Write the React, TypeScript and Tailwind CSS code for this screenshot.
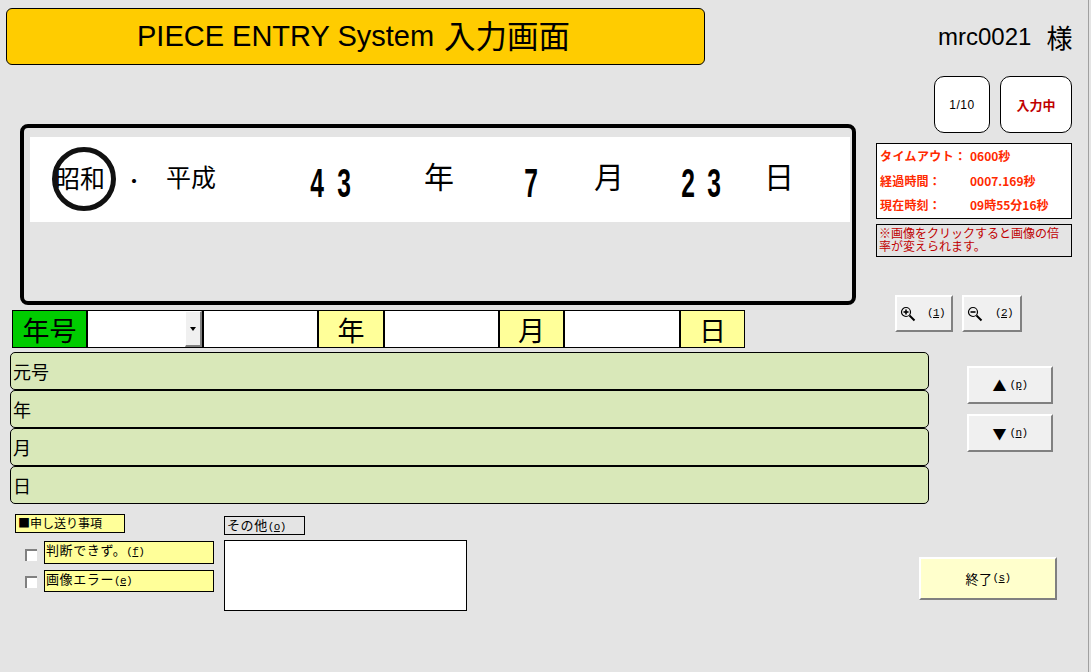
const jp = "font-['Noto_Sans_CJK_JP','Liberation_Sans',sans-serif]";
const sans = "font-['Liberation_Sans','Noto_Sans_CJK_JP',sans-serif]";
const bevel = "border-2 border-t-white border-l-white border-b-[#808080] border-r-[#808080] bg-[#f0f0f0] flex items-center text-[12px] text-black";

function Key({ k }: { k: string }) {
  return (
    <span className="font-['Liberation_Mono',monospace] text-[11px] tracking-[-0.6px] leading-none">
      (<u>{k}</u>)
    </span>
  );
}

function Magnifier({ plus }: { plus: boolean }) {
  return (
    <svg width="16" height="16" viewBox="0 0 16 16" fill="none" className="shrink-0">
      <circle cx="6" cy="6" r="4.5" stroke="black" strokeWidth="1.2" />
      <path d="M3.5 6H8.5" stroke="black" strokeWidth="1.6" />
      {plus && <path d="M6 3.5V8.5" stroke="black" strokeWidth="1.6" />}
      <path d="M9.5 9.5L14.5 14.5" stroke="black" strokeWidth="2" />
    </svg>
  );
}

function Digit({ d, ml }: { d: string; ml: string }) {
  return (
    <span className={`${ml} ${sans} w-[14px] mt-[8px] shrink-0 flex justify-center text-[41px] font-bold leading-none scale-x-[0.6]`}>
      {d}
    </span>
  );
}

function Cell({ w, children, bg }: { w: string; children?: React.ReactNode; bg: string }) {
  return (
    <div className={`${w} ${bg} h-[38px] border border-black flex items-center justify-center text-[27px] leading-none text-black`}>
      {children}
    </div>
  );
}

function GreenRow({ text }: { text: string }) {
  return (
    <div className="h-[38px] rounded-[5px] border border-black bg-[#d9e8b9] flex items-center pl-[2px] text-[18px] text-black">
      {text}
    </div>
  );
}

function InfoRow({ label, value, wide }: { label: string; value: string; wide?: boolean }) {
  return (
    <div className="flex h-[24.5px] items-center whitespace-nowrap">
      <span className={`w-[90px] ${wide ? "tracking-[0.4px]" : "tracking-[0.2px]"}`}>{label}</span>
      <span>{value}</span>
    </div>
  );
}

export default function App() {
  return (
    <div className={`w-[1091px] h-[672px] bg-[#e4e4e4] overflow-hidden ${jp}`}>
      <div className="w-[1089px] h-[672px] border-r border-[#a0a0a0] flex flex-col">
        <div className="flex h-[348px]">
          <div className="w-[876px] shrink-0 flex flex-col">
            <div className="ml-[6px] mt-[8px] w-[699px] h-[57px] rounded-[6px] border border-black bg-[#ffcc00] flex items-center pl-[130px] text-[29px] leading-none text-black whitespace-nowrap">
              <span className={sans}>PIECE ENTRY System</span>
              <span className="ml-[10px] text-[31.5px] -mt-[3px]">入力画面</span>
            </div>
            <div className="ml-[20px] mt-[59px] w-[836px] h-[181px] rounded-[8px] border-[4px] border-black pt-[9px] pl-[6px] pr-[2px]">
              <div className="h-[85px] bg-white flex items-center text-black leading-none whitespace-nowrap relative">
                <span className="ml-[25px] w-[52px] text-[25px] -mt-[4px] shrink-0">昭和</span>
                <div className="absolute left-[22px] top-[10px] w-[64px] h-[64px] rounded-full border-[5px] border-[#111]" />
                <span className="ml-[17px] w-[20px] text-center text-[16px] font-bold shrink-0">・</span>
                <span className="ml-[22px] w-[50px] text-[25px] -mt-[6px] shrink-0">平成</span>
                <Digit d="4" ml="ml-[94px]" />
                <Digit d="3" ml="ml-[13px]" />
                <span className="ml-[73px] w-[30px] text-[30px] -mt-[10px] shrink-0">年</span>
                <Digit d="7" ml="ml-[70px]" />
                <span className="ml-[56px] w-[30px] text-[30px] -mt-[10px] shrink-0">月</span>
                <Digit d="2" ml="ml-[57px]" />
                <Digit d="3" ml="ml-[12px]" />
                <span className="ml-[43px] w-[30px] text-[30px] -mt-[10px] shrink-0">日</span>
              </div>
            </div>
            <div className="ml-[12px] mt-[5px] flex">
              <Cell w="w-[75px]" bg="bg-[#00cc00]">年号</Cell>
              <div className="w-[116px] h-[38px] border border-black bg-white flex justify-end items-stretch">
                <div className="w-[17px] border-l border-t border-t-white border-l-white border-r-2 border-b-2 border-r-[#808080] border-b-[#808080] bg-[#f0f0f0] flex items-center justify-center">
                  <div className="w-0 h-0 border-l-[3px] border-r-[3px] border-t-[4px] border-l-transparent border-r-transparent border-t-black" />
                </div>
              </div>
              <Cell w="w-[115px]" bg="bg-white" />
              <Cell w="w-[66px]" bg="bg-[#ffff99]">年</Cell>
              <Cell w="w-[115px]" bg="bg-white" />
              <Cell w="w-[65px]" bg="bg-[#ffff99]">月</Cell>
              <Cell w="w-[116px]" bg="bg-white" />
              <Cell w="w-[65px]" bg="bg-[#ffff99]">日</Cell>
            </div>
          </div>
          <div className="flex-1 flex flex-col">
            <div className="ml-[62px] mt-[22px] h-[30px] flex items-center whitespace-nowrap text-black">
              <span className={`${sans} text-[24px] leading-none`}>mrc0021</span>
              <span className="ml-[15px] text-[26px] leading-none">様</span>
            </div>
            <div className="ml-[58px] mt-[24px] flex gap-[10px]">
              <div className={`w-[56px] h-[57px] rounded-[10px] border border-black bg-white flex items-center justify-center text-[12px] tracking-[0.5px] text-black ${sans}`}>1/10</div>
              <div className="w-[72px] h-[57px] rounded-[10px] border border-black bg-white flex items-center justify-center text-[13px] font-bold text-[#c00000]">入力中</div>
            </div>
            <div className="mt-[10px] w-[196px] h-[76px] border border-black bg-white pl-[3px] text-[12px] font-bold text-[#ff2a00] leading-none">
              <InfoRow label="タイムアウト：" value="0600秒" wide />
              <InfoRow label="経過時間：" value="0007.169秒" />
              <InfoRow label="現在時刻：" value="09時55分16秒" />
            </div>
            <div className="mt-[5px] w-[196px] h-[33px] border border-black bg-[#e4e4e4] px-[2px] pt-[1px] text-[12px] leading-[13px] text-[#c00000]">
              ※画像をクリックすると画像の倍率が変えられます。
            </div>
            <div className="ml-[19px] mt-[38px] flex gap-[9px]">
              <div className={`${bevel} w-[58px] h-[37px] pl-[3px] gap-[11px]`}>
                <Magnifier plus />
                <Key k="1" />
              </div>
              <div className={`${bevel} w-[60px] h-[37px] pl-[3px] gap-[12px]`}>
                <Magnifier plus={false} />
                <Key k="2" />
              </div>
            </div>
          </div>
        </div>

        <div className="flex mt-[4px]">
          <div className="ml-[10px] w-[919px] shrink-0 flex flex-col">
            <GreenRow text="元号" />
            <GreenRow text="年" />
            <GreenRow text="月" />
            <GreenRow text="日" />
          </div>
          <div className="ml-[38px] mt-[14px] flex flex-col gap-[10px]">
            <div className={`${bevel} w-[86px] h-[38px] justify-center gap-[3px]`}>
              <span className="text-[14px] leading-none">▲</span>
              <Key k="p" />
            </div>
            <div className={`${bevel} w-[86px] h-[38px] justify-center gap-[3px]`}>
              <span className="text-[14px] leading-none">▼</span>
              <Key k="n" />
            </div>
          </div>
        </div>

        <div className="flex mt-[10px] text-[12px] text-black">
          <div className="ml-[15px] w-[209px] shrink-0 flex flex-col">
            <div className="w-[110px] h-[19px] border border-black bg-[#ffff99] pl-[2px] leading-[15px]">■申し送り事項</div>
            <div className="mt-[8px] flex">
              <div className="ml-[10px] mt-[8px] w-[12px] h-[12px] border-t-2 border-l-2 border-t-[#808080] border-l-[#808080] bg-white" />
              <div className="ml-[7px] w-[170px] h-[23px] border border-black bg-[#ffff99] pl-[1px] leading-[15px] text-[13px] tracking-[0.6px]">判断できず。<Key k="f" /></div>
            </div>
            <div className="mt-[6px] flex">
              <div className="ml-[10px] mt-[6px] w-[12px] h-[12px] border-t-2 border-l-2 border-t-[#808080] border-l-[#808080] bg-white" />
              <div className="ml-[7px] w-[170px] h-[22px] border border-black bg-[#ffff99] pl-[1px] leading-[15px] text-[13px] tracking-[0.6px]">画像エラー<Key k="e" /></div>
            </div>
          </div>
          <div className="w-[243px] shrink-0 flex flex-col mt-[2px]">
            <div className="w-[81px] h-[19px] border border-black pl-[2px] leading-[15px] text-[13px] tracking-[0.6px]">その他<Key k="o" /></div>
            <div className="mt-[5px] w-[243px] h-[71px] border border-black bg-white" />
          </div>
          <div className={`${bevel} ml-[452px] mt-[43px] w-[138px] h-[43px] justify-center !bg-[#ffffcc] text-[13px] tracking-[0.6px]`}>終了<Key k="s" /></div>
        </div>
      </div>
    </div>
  );
}
